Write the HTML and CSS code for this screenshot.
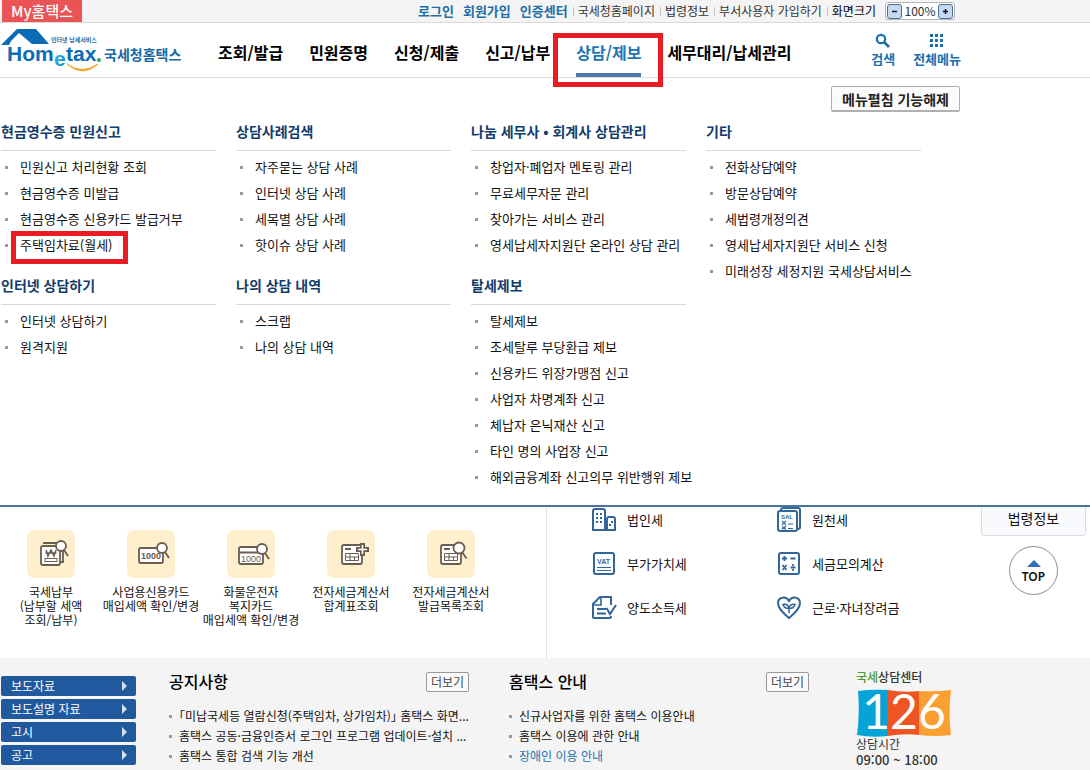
FILE: index.html
```html
<!DOCTYPE html>
<html lang="ko">
<head>
<meta charset="utf-8">
<meta name="viewport" content="width=device-width, initial-scale=1">
<title>국세청 홈택스</title>
<link rel="stylesheet" href="styles.css">
</head>
<body>
<div class="topbar">
  <a class="my" href="#">My홈택스</a>
  <ul class="account">
    <li><a href="#">로그인</a></li>
    <li><a href="#">회원가입</a></li>
    <li><a href="#">인증센터</a></li>
  </ul>
  <ul class="utility">
    <li><a href="#">국세청홈페이지</a></li>
    <li><a href="#">법령정보</a></li>
    <li><a href="#">부서사용자 가입하기</a></li>
    <li class="strong">화면크기</li>
  </ul>
  <div class="zoom">
    <button type="button" aria-label="축소"><svg width="13" height="13" viewBox="0 0 13 13"><path d="M4 6.5h5" stroke="#111" stroke-width="1.4"/></svg></button>
    <span>100%</span>
    <button type="button" aria-label="확대"><svg width="13" height="13" viewBox="0 0 13 13"><path d="M4 6.5h5M6.5 4v5" stroke="#111" stroke-width="1.4"/></svg></button>
  </div>
</div>

<header class="header">
  <a class="logo" href="#" aria-label="국세청홈택스">
    <svg width="184" height="50" viewBox="0 26 184 50">
      <defs><linearGradient id="cyan" x1="0" y1="0" x2="1" y2="1"><stop offset="0" stop-color="#35c4e8"/><stop offset="1" stop-color="#0d80c4"/></linearGradient></defs>
      <path d="M1 46 L17 30 H36 L49 45 H32 L19 34 L11 42 L9 46 Z" fill="#0c6bb5"/>
      <text class="brand" x="7" y="62">Hom</text>
      <text class="brand drop" x="54" y="67">e</text>
      <text class="brand" x="66" y="62">tax</text>
      <circle cx="99" cy="61" r="2" fill="#2fa84a"/>
      <path d="M67 65 Q82 76 98 65 Q83 79 67 65Z" fill="#f5a32e" stroke="#f5a32e" stroke-width="1"/>
      <text class="tiny" x="51" y="43">인터넷 납세서비스</text>
      <text class="name" x="104" y="61">국세청홈택스</text>
    </svg>
  </a>
  <nav class="gnb" aria-label="주 메뉴">
    <a href="#">조회/발급</a>
    <a href="#">민원증명</a>
    <a href="#">신청/제출</a>
    <a href="#">신고/납부</a>
    <a class="active" href="#">상담/제보</a>
    <a href="#">세무대리/납세관리</a>
  </nav>
  <div class="tools">
    <a href="#"><svg width="16" height="16" viewBox="0 0 16 16" fill="none" stroke="#1c6fae"><circle cx="6" cy="6" r="4.2" stroke-width="2.2"/><path d="M9 9l5 5" stroke-width="2.6"/></svg><span>검색</span></a>
    <a href="#"><svg width="16" height="16" viewBox="0 0 16 16" fill="#1c6fae"><path d="M1 1h3v3H1zM6 1h3v3H6zM11 1h3v3h-3zM1 6h3v3H1zM6 6h3v3H6zM11 6h3v3h-3zM1 11h3v3H1zM6 11h3v3H6zM11 11h3v3h-3z"/></svg><span>전체메뉴</span></a>
  </div>
</header>

<section class="mega" aria-label="상담/제보 메뉴">
  <button class="unfold" type="button">메뉴펼침 기능해제</button>
  <div class="columns">
    <div class="column">
      <div class="group"><h2>현금영수증 민원신고</h2>
        <ul><li><a href="#">민원신고 처리현황 조회</a></li><li><a href="#">현금영수증 미발급</a></li><li><a href="#">현금영수증 신용카드 발급거부</a></li><li class="marked"><a href="#">주택임차료(월세)</a></li></ul></div>
      <div class="group"><h2>인터넷 상담하기</h2>
        <ul><li><a href="#">인터넷 상담하기</a></li><li><a href="#">원격지원</a></li></ul></div>
    </div>
    <div class="column">
      <div class="group"><h2>상담사례검색</h2>
        <ul><li><a href="#">자주묻는 상담 사례</a></li><li><a href="#">인터넷 상담 사례</a></li><li><a href="#">세목별 상담 사례</a></li><li><a href="#">핫이슈 상담 사례</a></li></ul></div>
      <div class="group"><h2>나의 상담 내역</h2>
        <ul><li><a href="#">스크랩</a></li><li><a href="#">나의 상담 내역</a></li></ul></div>
    </div>
    <div class="column">
      <div class="group"><h2>나눔 세무사 • 회계사 상담관리</h2>
        <ul><li><a href="#">창업자·폐업자 멘토링 관리</a></li><li><a href="#">무료세무자문 관리</a></li><li><a href="#">찾아가는 서비스 관리</a></li><li><a href="#">영세납세자지원단 온라인 상담 관리</a></li></ul></div>
      <div class="group"><h2>탈세제보</h2>
        <ul><li><a href="#">탈세제보</a></li><li><a href="#">조세탈루 부당환급 제보</a></li><li><a href="#">신용카드 위장가맹점 신고</a></li><li><a href="#">사업자 차명계좌 신고</a></li><li><a href="#">체납자 은닉재산 신고</a></li><li><a href="#">타인 명의 사업장 신고</a></li><li><a href="#">해외금융계좌 신고의무 위반행위 제보</a></li></ul></div>
    </div>
    <div class="column">
      <div class="group"><h2>기타</h2>
        <ul><li><a href="#">전화상담예약</a></li><li><a href="#">방문상담예약</a></li><li><a href="#">세법령개정의견</a></li><li><a href="#">영세납세자지원단 서비스 신청</a></li><li><a href="#">미래성장 세정지원 국세상담서비스</a></li></ul></div>
    </div>
  </div>
</section>

<main class="services">
  <div class="quick">
    <a href="#"><span class="tile"><svg width="48" height="48" viewBox="0 0 48 48" fill="none" stroke="#6b5d52" stroke-width="1.8"><path d="M17 14V13h15M36 20v12h-3" /><rect x="14" y="16" width="19" height="19" rx="2" fill="#fff"/><path d="M19 20l2 6 3-6 3 6 2-6M18.500 23h11" stroke-width="1.5"/><rect x="18" y="28.500" width="12" height="3" stroke-width="1"/><circle cx="34" cy="16" r="5" fill="#fff"/><path d="M37 20l4 6"/></svg></span>국세납부<br>(납부할 세액<br>조회/납부)</a>
    <a href="#"><span class="tile"><svg width="48" height="48" viewBox="0 0 48 48" fill="none" stroke="#6b5d52" stroke-width="1.8"><rect x="12" y="18" width="24" height="15" rx="2" fill="#fff"/><text class="bill" x="14" y="29">1000</text><circle cx="35" cy="18" r="5" fill="#fff"/><path d="M38 22l4 6"/></svg></span>사업용신용카드<br>매입세액 확인/변경</a>
    <a href="#"><span class="tile"><svg width="48" height="48" viewBox="0 0 48 48" fill="none" stroke="#6b5d52" stroke-width="1.800"><rect x="12" y="17" width="24" height="17" rx="2" fill="#fff"/><path d="M12 22.500h24" stroke-width="2"/><text class="bill light" x="14" y="32">1000</text><circle cx="35" cy="19" r="5" fill="#fff"/><path d="M38 23l4 6"/></svg></span>화물운전자<br>복지카드<br>매입세액 확인/변경</a>
    <a href="#"><span class="tile"><svg width="48" height="48" viewBox="0 0 48 48" fill="none" stroke="#6b5d52" stroke-width="1.800"><rect x="15" y="15" width="20" height="19" rx="2" fill="#fff"/><path d="M18 19h6" stroke-width="2"/><path d="M18.500 23.500h13v7h-13zM18.500 27h13M23 23.500v7M27.500 27v3.500" stroke-width="1"/><path d="M35.500 13v13M29 19.500h13" stroke-width="5"/><path d="M35.500 15v9M31 19.500h9" stroke="#fff" stroke-width="1.600"/></svg></span>전자세금계산서<br>합계표조회</a>
    <a href="#"><span class="tile"><svg width="48" height="48" viewBox="0 0 48 48" fill="none" stroke="#6b5d52" stroke-width="1.800"><rect x="14" y="15" width="20" height="19" rx="2" fill="#fff"/><path d="M17 19h6" stroke-width="2"/><path d="M17.500 23.500h13v7h-13zM17.500 27h13M22 23.500v7M26.500 27v3.500" stroke-width="1"/><circle cx="32" cy="18" r="5.500" fill="#fff"/><path d="M35 22l4.500 6.500"/></svg></span>전자세금계산서<br>발급목록조회</a>
  </div>
  <div class="taxes">
    <a href="#"><svg width="26" height="26" viewBox="0 0 26 26" fill="none" stroke="#326699" stroke-width="2"><path d="M14 23H2V4q0-2 2-2h8q2 0 2 2zM14 23h10V12q0-2-2-2h-4q-2 0-2 2v11"/><path d="M5 7h2M9 7h2M5 11h2M9 11h2M5 15h2M9 15h2M18 18h2M20 15h2"/></svg>법인세</a>
    <a href="#"><svg width="26" height="26" viewBox="0 0 26 26" fill="none" stroke="#326699" stroke-width="2"><path d="M5 4V3q0-2 2-2h15q2 0 2 2v17q0 2-2 2"/><rect x="2" y="4" width="19" height="20" rx="2"/><text class="mini" x="5" y="12">SAL</text><path d="M6 14l4 4M10 14l-4 4M12 17h5M6 19.500l4 3M10 19l-4 3.500M12 21.500h5" stroke-width="1.200"/></svg>원천세</a>
    <a href="#"><svg width="26" height="26" viewBox="0 0 26 26" fill="none" stroke="#326699" stroke-width="2"><rect x="3" y="2" width="20" height="21" rx="2"/><text class="mini vat" x="6" y="13">VAT</text><path d="M6 16.500h14M6 19.500h14" stroke-width="1.200"/></svg>부가가치세</a>
    <a href="#"><svg width="26" height="26" viewBox="0 0 26 26" fill="none" stroke="#326699" stroke-width="2"><rect x="3" y="2" width="20" height="21" rx="2"/><path d="M6 7.500h5M8.500 5v5M14.500 7.500h5M6.500 14l4 5M10.500 14l-4 5M14.500 16.500h5M17 13v2M17 18v2" stroke-width="1.800"/></svg>세금모의계산</a>
    <a href="#"><svg width="26" height="26" viewBox="0 0 26 26" fill="none" stroke="#326699" stroke-width="2"><path d="M20 10V2H9L2 9v13q0 1 1 1h16q1 0 1-2"/><path d="M10 2v8H2" stroke-width="1.600"/><path d="M6 14h9M6 18.500h9M15.500 13l3.500 6 6-9"/></svg>양도소득세</a>
    <a href="#"><svg width="26" height="26" viewBox="0 0 26 26" fill="none" stroke="#326699" stroke-width="2"><path d="M13 23C8 18.500 2 14 2 8c0-6 8-7.500 11-2 3-5.500 11-4 11 2 0 6-6 10.500-11 15z"/><path d="M13 18v-6M13 13c-1-3.500-4-4-6-3.500 1 3 3.500 4.500 6 3.500zM13 13c1-3.500 4-4 6-3.500-1 3-3.500 4.500-6 3.500z" stroke-width="1.600"/></svg>근로·자녀장려금</a>
  </div>
  <aside class="side">
    <a class="law" href="#">법령정보</a>
    <a class="top" href="#"><svg width="14" height="8" viewBox="0 0 14 8"><path d="M7 0l7 7H0z" fill="#346cbc"/></svg>TOP</a>
  </aside>
</main>

<footer class="board">
  <ul class="press">
    <li><a href="#">보도자료</a></li>
    <li><a href="#">보도설명 자료</a></li>
    <li><a href="#">고시</a></li>
    <li><a href="#">공고</a></li>
  </ul>
  <section class="news">
    <div class="head"><h2>공지사항</h2><button type="button">더보기</button></div>
    <ul><li><a class="half" href="#">「미납국세등 열람신청(주택임차, 상가임차)」 홈택스 화면...</a></li><li><a href="#">홈택스 공동·금융인증서 로그인 프로그램 업데이트·설치 ...</a></li><li><a href="#">홈택스 통합 검색 기능 개선</a></li></ul>
  </section>
  <section class="news">
    <div class="head"><h2>홈택스 안내</h2><button type="button">더보기</button></div>
    <ul><li><a href="#">신규사업자를 위한 홈택스 이용안내</a></li><li><a href="#">홈택스 이용에 관한 안내</a></li><li><a class="blue" href="#">장애인 이용 안내</a></li></ul>
  </section>
  <div class="center">
    <p class="title"><em>국세</em>상담센터</p>
    <svg width="96" height="48" viewBox="0 0 96 48" role="img" aria-label="126">
      <path d="M2 2Q16 0 32 1V47Q16 49 1 46Q4 24 2 2z" fill="#05a3d6"/>
      <path d="M32 1Q48 4 63 2V46Q48 44 32 47Q30 24 32 1z" fill="#ef5423"/>
      <path d="M63 2Q80 3 95 1Q92 24 95 46Q80 48 63 46z" fill="#faa033"/>
      <text x="48" y="40">126</text>
    </svg>
    <p class="label">상담시간</p>
    <p class="hours">09:00 ~ 18:00</p>
  </div>
</footer>
</body>
</html>
```
FILE: styles.css
```css
*, *::before, *::after { box-sizing: border-box; }
body {
  margin: 0;
  background: #fff;
  color: #111;
  font: 12px/16px "Noto Sans CJK KR", "Noto Sans", sans-serif;
}
a { color: inherit; text-decoration: none; }
ul, h2, p { margin: 0; padding: 0; list-style: none; }
button { font-family: inherit; padding: 0; cursor: pointer; }
svg { display: block; flex: none; }

.topbar {
  display: flex;
  align-items: center;
  height: 23px;
  padding: 0 135px 0 2px;
  background: #f4f4f4;
  border-bottom: 1px solid #dadada;
}
.my {
  width: 80px;
  margin-right: auto;
  background: #ea5455;
  color: #fff;
  font-size: 15px;
  font-weight: 500;
  line-height: 22px;
  text-align: center;
}
.account, .utility { display: flex; align-items: center; white-space: nowrap; }
.account { gap: 9px; color: #1d6fa9; font-size: 13px; font-weight: 700; }
.utility { color: #333; }
.utility li { display: flex; align-items: center; }
.utility li::before {
  content: "";
  width: 1px;
  height: 9px;
  margin: 0 4px 0 5px;
  background: #c4c4c4;
}
.utility .strong { color: #000; }
.zoom {
  display: flex;
  align-items: center;
  justify-content: space-between;
  width: 70px;
  height: 18px;
  margin-left: 9px;
  padding: 0 1px;
  border: 1px solid #b5b5b5;
  border-radius: 3px;
  background: #fff;
  color: #333;
}
.zoom button {
  width: 15px;
  height: 15px;
  border: 1px solid #4c7196;
  border-radius: 3px;
  background: #c3d9f0;
}

.header {
  display: flex;
  align-items: center;
  height: 55px;
  padding-right: 129px;
  border-bottom: 1px solid #dedede;
}
.brand { font: 700 21px "Liberation Sans", sans-serif; fill: #0c6bb5; }
.brand.drop { fill: url(#cyan); }
.tiny { font-size: 6px; font-weight: 700; fill: #1d6fa9; }
.name { font-size: 14px; font-weight: 700; fill: #1668a8; }
.gnb {
  display: flex;
  gap: 26px;
  margin-left: 34px;
  color: #000;
  font-size: 16px;
  font-weight: 700;
  line-height: 42px;
  white-space: nowrap;
}
.gnb a { padding-top: 4px; }
.gnb .active {
  position: relative;
  color: #1c74b4;
  border-bottom: 4px solid #4d77ab;
  margin-bottom: -4px;
}
.gnb .active::after {
  content: "";
  position: absolute;
  inset: 6px -22px -14px -23px;
  border: 5px solid #e91c24;
  z-index: 2;
}
.tools { display: flex; gap: 18px; margin-left: auto; color: #1c6fae; font-size: 13px; font-weight: 700; line-height: 18px; }
.tools a { display: flex; flex-direction: column; align-items: center; gap: 1px; }

.mega { padding: 8px 0 15px 1px; border-bottom: 2px solid #4a74a0; }
.unfold {
  display: block;
  width: 129px;
  height: 26px;
  margin: 0 130px 9px auto;
  border: 1px solid #b0b0b0;
  border-bottom-width: 2px;
  border-radius: 2px;
  background: #fbfbfb;
  color: #222;
  font-size: 14px;
  font-weight: 700;
  line-height: 20px;
}
.columns { display: grid; grid-template-columns: repeat(4, minmax(0, 215px)); gap: 20px; white-space: nowrap; }
.group + .group { margin-top: 17px; }
.group h2 {
  padding-bottom: 9px;
  border-bottom: 1px solid #d9d9d9;
  color: #123c6c;
  font-size: 14px;
  font-weight: 700;
  line-height: 20px;
}
.group ul { padding-top: 3px; font-size: 13px; line-height: 26px; }
.group li { position: relative; display: flex; align-items: center; gap: 12px; padding-left: 4px; }
.group li::before { content: ""; flex: none; width: 3px; height: 3px; background: #999; }
.marked::after {
  content: "";
  position: absolute;
  left: 10px;
  top: -1px;
  width: 117px;
  height: 33px;
  border: 5px solid #e91c24;
}

.services { display: flex; min-height: 151px; }
.quick {
  display: flex;
  flex: 1;
  max-width: 547px;
  padding: 23px 0 0 1px;
  border-right: 1px solid #e0e0e0;
  line-height: 14px;
  text-align: center;
  white-space: nowrap;
}
.quick a { width: 100px; }
.tile {
  display: block;
  width: 48px;
  height: 48px;
  margin: 0 auto 7px;
  border-radius: 7px;
  background: #fef0cc;
}
.bill { font: 700 9px "Liberation Sans", sans-serif; fill: #6b5d52; stroke: none; }
.bill.light { font-weight: 400; }
.taxes {
  display: grid;
  grid-template-columns: 185px 185px;
  grid-auto-rows: 26px;
  row-gap: 18px;
  margin-left: 44px;
  font-size: 13px;
}
.taxes a { display: flex; align-items: center; gap: 10px; }
.mini { font: 700 6px "Liberation Sans", sans-serif; fill: #326699; stroke: none; }
.mini.vat { font-size: 7px; }
.side { display: flex; flex-direction: column; align-items: center; gap: 10px; margin: 0 4px 0 auto; }
.law {
  width: 105px;
  height: 29px;
  border: 1px solid #dcdcdf;
  border-top: 0;
  border-radius: 0 0 4px 4px;
  background: #f9fafd;
  font-size: 14px;
  line-height: 22px;
  text-align: center;
}
.top {
  display: flex;
  flex-direction: column;
  align-items: center;
  width: 49px;
  height: 49px;
  padding-top: 13px;
  border: 1px solid #8b8b98;
  border-radius: 50%;
  font: 600 12px/18px "Noto Sans", sans-serif;
}

.board { display: flex; min-height: 112px; padding-left: 1px; background: #f4f4f4; }
.press { display: flex; flex-direction: column; gap: 3px; width: 135px; padding-top: 18px; }
.press a {
  display: flex;
  align-items: center;
  justify-content: space-between;
  height: 20px;
  padding: 0 9px 0 10px;
  border-radius: 2px;
  background: #21599e;
  color: #fff;
}
.press a::after {
  content: "";
  border: 5px solid transparent;
  border-left: 5px solid #d5e0ef;
  border-right: 0;
}
.news { width: 300px; margin-left: 33px; padding-top: 14px; white-space: nowrap; }
.news + .news { margin-left: 40px; }
.head { display: flex; align-items: flex-start; justify-content: space-between; margin-bottom: 14px; }
.news h2 { font-size: 16px; font-weight: 500; line-height: 18px; color: #000; }
.news button {
  width: 43px;
  height: 20px;
  border: 1px solid #999;
  border-radius: 2px;
  background: #fafafa;
  color: #444;
  font-size: 12px;
  line-height: 16px;
}
.news li { display: flex; align-items: center; gap: 7px; line-height: 20px; }
.news li::before { content: ""; flex: none; width: 3px; height: 3px; background: #999; }
.news .half { font-feature-settings: "halt"; }
.news .blue { color: #2473ae; }
.center { margin-left: 47px; padding-top: 10px; color: #333; }
.center .title { margin-bottom: 4px; font-size: 12px; font-weight: 500; line-height: 17px; }
.center em { color: #4c9a2a; font-style: normal; }
.center svg { overflow: visible; }
.center text { font: 400 48px Lato, sans-serif; fill: #fff; text-anchor: middle; }
.center .label { line-height: 14px; }
.center .hours { font: 500 13px/18px "Noto Sans CJK KR", sans-serif; }
```
